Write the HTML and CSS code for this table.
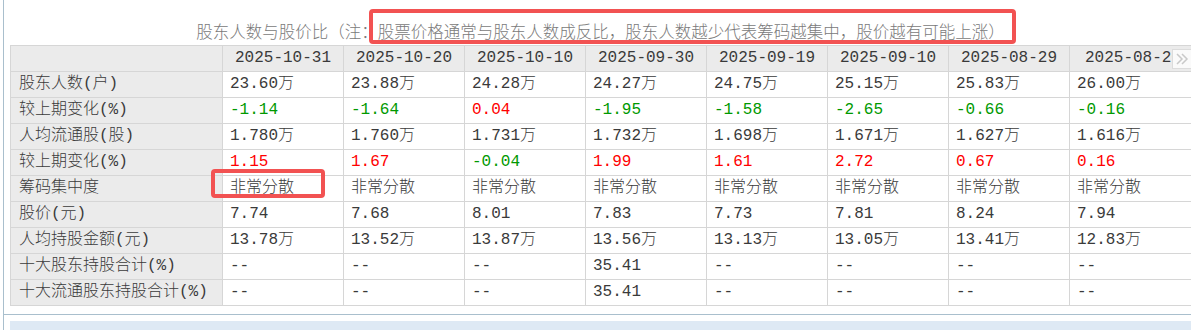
FILE: index.html
```html
<!DOCTYPE html>
<html lang="zh-CN">
<head>
<meta charset="utf-8">
<title>股东人数与股价比</title>
<link rel="stylesheet" href="styles.css">
</head>
<body>
<div class="panel">
  <div class="title">股东人数与股价比（注：股票价格通常与股东人数成反比，股东人数越少代表筹码越集中，股价越有可能上涨）</div>
  <div class="table-wrap">
    <table class="data">
      <colgroup>
        <col class="c-label"><col class="c-d"><col class="c-d"><col class="c-d"><col class="c-d"><col class="c-d"><col class="c-d"><col class="c-d"><col class="c-last">
      </colgroup>
      <thead>
        <tr><th class="lbl"></th><th>2025-10-31</th><th>2025-10-20</th><th>2025-10-10</th><th>2025-09-30</th><th>2025-09-19</th><th>2025-09-10</th><th>2025-08-29</th><th class="clip">2025-08-20</th></tr>
      </thead>
      <tbody>
        <tr><td class="lbl">股东人数(户)</td><td>23.60万</td><td>23.88万</td><td>24.28万</td><td>24.27万</td><td>24.75万</td><td>25.15万</td><td>25.83万</td><td>26.00万</td></tr>
        <tr><td class="lbl">较上期变化(%)</td><td class="dn">-1.14</td><td class="dn">-1.64</td><td class="up">0.04</td><td class="dn">-1.95</td><td class="dn">-1.58</td><td class="dn">-2.65</td><td class="dn">-0.66</td><td class="dn">-0.16</td></tr>
        <tr><td class="lbl">人均流通股(股)</td><td>1.780万</td><td>1.760万</td><td>1.731万</td><td>1.732万</td><td>1.698万</td><td>1.671万</td><td>1.627万</td><td>1.616万</td></tr>
        <tr><td class="lbl">较上期变化(%)</td><td class="up">1.15</td><td class="up">1.67</td><td class="dn">-0.04</td><td class="up">1.99</td><td class="up">1.61</td><td class="up">2.72</td><td class="up">0.67</td><td class="up">0.16</td></tr>
        <tr><td class="lbl">筹码集中度</td><td>非常分散</td><td>非常分散</td><td>非常分散</td><td>非常分散</td><td>非常分散</td><td>非常分散</td><td>非常分散</td><td>非常分散</td></tr>
        <tr><td class="lbl">股价(元)</td><td>7.74</td><td>7.68</td><td>8.01</td><td>7.83</td><td>7.73</td><td>7.81</td><td>8.24</td><td>7.94</td></tr>
        <tr><td class="lbl">人均持股金额(元)</td><td>13.78万</td><td>13.52万</td><td>13.87万</td><td>13.56万</td><td>13.13万</td><td>13.05万</td><td>13.41万</td><td>12.83万</td></tr>
        <tr><td class="lbl">十大股东持股合计(%)</td><td>--</td><td>--</td><td>--</td><td>35.41</td><td>--</td><td>--</td><td>--</td><td>--</td></tr>
        <tr><td class="lbl">十大流通股东持股合计(%)</td><td>--</td><td>--</td><td>--</td><td>35.41</td><td>--</td><td>--</td><td>--</td><td>--</td></tr>
      </tbody>
    </table>
    <button class="next" type="button" aria-label="下一页">
      <svg width="14" height="14" viewBox="0 0 14 14"><path d="M2 2l5 5-5 5M7 2l5 5-5 5" fill="none" stroke="#c9c9c9" stroke-width="1.5"/></svg>
    </button>
  </div>
</div>
<div class="panel2">
  <div class="bluebox"></div>
</div>
<div class="mark mark-title"></div>
<div class="mark mark-cell"></div>
</body>
</html>
```

FILE: styles.css
```css
html, body {
  margin: 0;
  padding: 0;
  background: #fff;
  overflow: hidden;
}
body {
  width: 1191px;
  height: 330px;
  position: relative;
  font-family: "Liberation Mono", "Noto Sans CJK SC", monospace;
  font-weight: 300;
  color: #3a3a3a;
}
.panel {
  margin-left: 3px;
  border-left: 1px solid #a9bfcd;
  border-bottom: 1px solid #a9bfcd;
  padding: 0 0 8px 6px;
}
.title {
  height: 45px;
  box-sizing: border-box;
  padding-top: 20px;
  line-height: 22px;
  font-family: "Noto Sans CJK SC", sans-serif;
  font-weight: 300;
  font-size: 16.5px;
  color: #7a7a7a;
  text-align: center;
  white-space: nowrap;
  width: 1181px;
}
.table-wrap {
  position: relative;
  overflow: hidden;
}
.data {
  border-collapse: collapse;
  table-layout: fixed;
  width: 1290px;
  font-size: 16px;
}
.c-label { width: 212px; }
.c-d { width: 121px; }
.c-last { width: 231px; }
.data th, .data td {
  height: 25px;
  padding: 0 0 0 7px;
  border: 1px solid #d6d6d6;
  white-space: nowrap;
  overflow: hidden;
  text-align: left;
  vertical-align: middle;
  font-weight: 300;
  line-height: 25px;
}
.data thead th {
  background: #ebebeb;
  text-align: center;
  padding: 0;
}
.data thead th.clip {
  text-align: left;
  padding-left: 15px;
}
.data td.lbl {
  background: #ebebeb;
  padding-left: 8px;
}
.data .up { color: #f00; }
.data .dn { color: #090; }
.next {
  position: absolute;
  left: 1162px;
  top: 4px;
  width: 20px;
  height: 20px;
  padding: 0;
  margin: 0;
  border: 1px solid #dcdcdc;
  background: #fafafa;
  display: flex;
  align-items: center;
  justify-content: center;
}
.panel2 {
  margin-left: 3px;
  border-left: 1px solid #a9bfcd;
  padding: 6px 0 0 6px;
}
.bluebox {
  height: 20px;
  background: #dee9f4;
}
.mark {
  position: absolute;
  border: 4px solid #f25252;
  border-radius: 4px;
  box-sizing: border-box;
}
.mark-title {
  left: 369px;
  top: 9px;
  width: 647px;
  height: 35px;
}
.mark-cell {
  left: 211px;
  top: 169px;
  width: 114px;
  height: 29px;
}
```
